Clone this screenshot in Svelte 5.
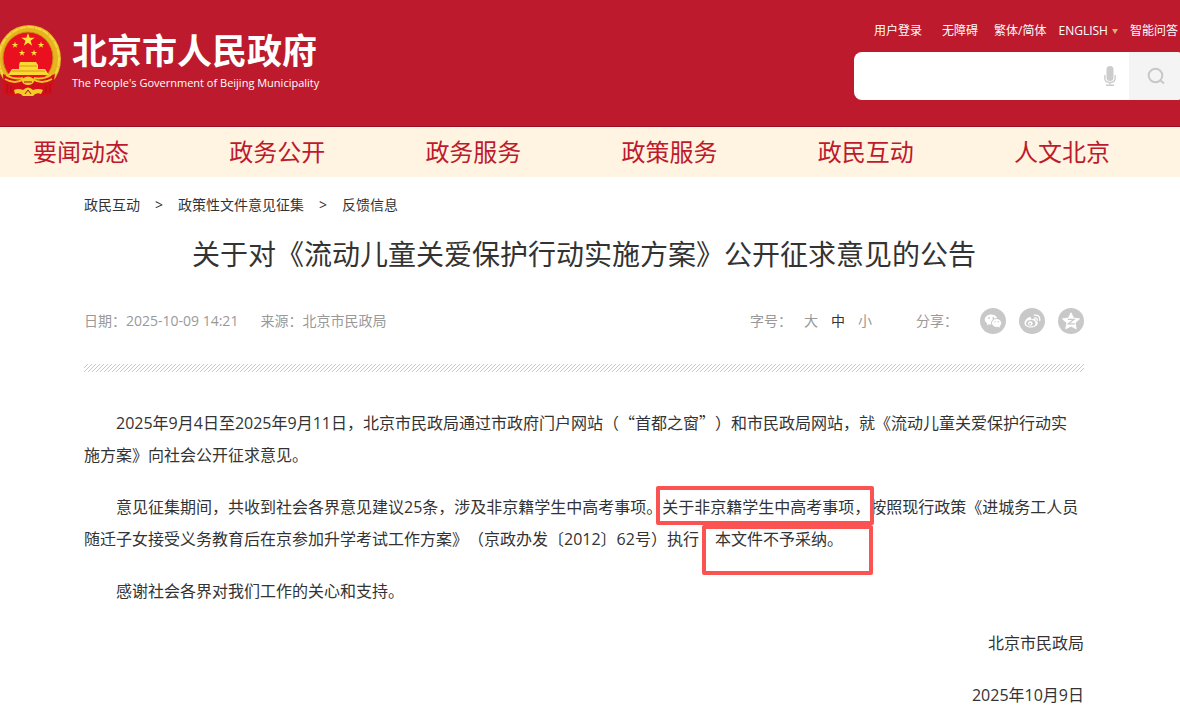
<script lang="ts">
  interface NavItem {
    label: string;
    href: string;
  }

  const userLinks: NavItem[] = [
    { label: '用户登录', href: '#login' },
    { label: '无障碍', href: '#accessible' },
    { label: '繁体/简体', href: '#variant' }
  ];

  const navItems: NavItem[] = [
    { label: '要闻动态', href: '#news' },
    { label: '政务公开', href: '#open' },
    { label: '政务服务', href: '#service' },
    { label: '政策服务', href: '#policy' },
    { label: '政民互动', href: '#interact' },
    { label: '人文北京', href: '#culture' }
  ];

  const crumbs: string[] = ['政民互动', '政策性文件意见征集', '反馈信息'];
  const sizes: string[] = ['大', '中', '小'];

  let activeSize: string = $state('中');
  let query: string = $state('');

  function handleSearch(event: SubmitEvent): void {
    event.preventDefault();
  }
</script>

{#snippet star(x: number, y: number, r: number)}
  <path
    transform="translate({x} {y}) scale({r})"
    d="M0-1 .23-.31 .95-.31 .37.12 .59.81 0 .38-.59.81-.37.12-.95-.31-.23-.31Z"
    fill="#fde23c"
  />
{/snippet}

<header class="site-header">
  <a class="brand" href="#home">
    <svg class="emblem" viewBox="0 0 62 74" aria-hidden="true">
      <ellipse cx="29" cy="35" rx="32" ry="34" fill="#e6b41f" />
      <ellipse cx="29" cy="35" rx="30" ry="32" fill="none" stroke="#f5d540" stroke-width="2" stroke-dasharray="7 1" />
      <ellipse cx="28" cy="34" rx="25" ry="26" fill="#ea1020" stroke="#c98a12" />
      {@render star(28, 16, 7)}
      {@render star(15, 21, 3.4)}
      {@render star(41, 21, 3.4)}
      {@render star(22, 29, 3.4)}
      {@render star(34, 29, 3.4)}
      <path d="M20 38h16l2 3v4h7l4 6H8l4-6h7v-4Z" fill="#fbd833" />
      <path d="M19 42h18M12 47h33" stroke="#d79a14" fill="none" />
      <path d="M3 50q11 4 20 6h12q11-2 20-6l-3 20-10 2-6-3H21l-6 3-11-2Z" fill="#d30f1c" />
      <path d="M5 55q10 6 19 0 4-3 8 0 10 6 20 0M6 51q8 5 17 3M51 51q-8 5-17 3" stroke="#f2c322" stroke-width="2" fill="none" />
      <ellipse cx="28" cy="57" rx="6" ry="4" fill="#f4cb2b" />
      <path d="M14 66q5-2 9 0 5-5 10 0 5-2 10 0l-2 4q-5-2-8 2H23q-3-4-8-2Z" fill="#f4cb2b" />
      <path d="M24 58h8M25 70l3-4 3 4M7 60v9M11 62v7M46 62v7M50 60v9" stroke="#a80f18" fill="none" />
    </svg>
    <span class="brand-text">
      <span class="brand-name">北京市人民政府</span>
      <span class="brand-en">The People's Government of Beijing Municipality</span>
    </span>
  </a>

  <div class="tools">
    <div class="user-links">
      {#each userLinks as link}
        <a href={link.href}>{link.label}</a>
      {/each}
      <a class="english" href="#english">ENGLISH <span class="caret"></span></a>
      <a href="#qa">智能问答</a>
    </div>
    <form class="search" onsubmit={handleSearch}>
      <input type="text" aria-label="搜索" bind:value={query} />
      <button class="voice" type="button" aria-label="语音">
        <svg width="12" height="20" viewBox="0 0 12 20">
          <rect x="2.5" y="0" width="7" height="15" rx="3.5" fill="#ccc" />
          <path d="M.8 9v3q0 4.5 5.2 4.5T11.2 12V9M6 16.5V19M2 19.3h8" fill="none" stroke="#ccc" stroke-width="1.4" />
        </svg>
      </button>
      <button class="submit" type="submit" aria-label="提交">
        <svg width="18" height="18" viewBox="0 0 18 18">
          <circle cx="8.5" cy="8.5" r="6.8" fill="none" stroke="#c8c8c8" stroke-width="2" />
          <path d="M13 13l4 3.5" stroke="#c8c8c8" stroke-width="2" />
        </svg>
      </button>
    </form>
  </div>
</header>

<nav class="main-nav">
  {#each navItems as item}
    <a href={item.href}>{item.label}</a>
  {/each}
</nav>

<main class="article">
  <div class="crumbs">
    {#each crumbs as crumb, i}
      {#if i > 0}<span>&gt;</span>{/if}
      <a href="#crumb-{i}">{crumb}</a>
    {/each}
  </div>

  <h1>关于对《流动儿童关爱保护行动实施方案》公开征求意见的公告</h1>

  <div class="meta">
    <div class="source">
      <span>日期：2025-10-09 14:21</span>
      <span>来源：北京市民政局</span>
    </div>
    <div class="options">
      <span>字号：</span>
      <div class="sizes">
        {#each sizes as size}
          <button type="button" class:active={size === activeSize} onclick={() => (activeSize = size)}>{size}</button>
        {/each}
      </div>
      <span>分享：</span>
      <div class="share">
        <a href="#wechat" aria-label="微信">
          <svg viewBox="0 0 26 26">
            <path d="M11.2 6.5c-3.6 0-6.4 2.2-6.4 5 0 1.7 1 3.1 2.5 4l-.6 2 2.3-1.2c.8.2 1.5.3 2.3.3-.9-3.8 2-6.7 6-6.5-.7-2.1-3.1-3.6-6.1-3.6Z" fill="#fff" />
            <path d="M21.3 15c0-2.3-2.2-4-4.7-4s-4.7 1.7-4.7 4 2.2 4 4.7 4c.6 0 1.2-.1 1.7-.2l1.8 1-.5-1.7c1-.7 1.7-1.8 1.7-3.1Z" fill="#fff" />
            <circle cx="9" cy="10" r=".9" /><circle cx="13.2" cy="10" r=".9" />
            <circle cx="15" cy="13.8" r=".7" /><circle cx="18.2" cy="13.8" r=".7" />
          </svg>
        </a>
        <a href="#weibo" aria-label="微博">
          <svg viewBox="0 0 26 26">
            <path d="M11.5 9.2c-1.2-1-6 2.3-6 6.1 0 2.6 3 4.2 6.3 4.2 4 0 7-2.2 7-4.5 0-1.4-1.1-2-2.2-2.3.7-1.9-.8-2.7-4.5-1.3.3-1 .1-1.8-.6-2.2Z" fill="#fff" />
            <ellipse cx="11.8" cy="15.3" rx="4.6" ry="3.2" />
            <circle cx="11.3" cy="15.5" r="2.3" fill="#fff" />
            <circle cx="11" cy="15.8" r="1" />
            <path d="M15.5 9.8q3-.2 2.7 2.6M15.3 7.2q6-.4 5.5 5.3" fill="none" stroke="#fff" stroke-width="1.3" stroke-linecap="round" />
          </svg>
        </a>
        <a href="#qzone" aria-label="QQ空间">
          <svg viewBox="0 0 26 26">
            <path d="M13 4.8l2.5 5.3 6 .8-4.4 4 1.1 5.9-5.2-2.8-5.2 2.8 1.1-5.9-4.4-4 6-.8Z" fill="#fff" stroke="#fff" stroke-linejoin="round" />
            <path d="M9.8 11.3h6.2l-5.6 4.5h6.4" fill="none" stroke="#c8c8c8" stroke-width="1.3" />
          </svg>
        </a>
      </div>
    </div>
  </div>

  <div class="hatch"></div>

  <div class="content">
    <p>2025年9月4日至2025年9月11日，北京市民政局通过市政府门户网站（<span class="cjk">“首都之窗”</span>）和市民政局网站，就《流动儿童关爱保护行动实施方案》向社会公开征求意见。</p>
    <p>意见征集期间，共收到社会各界意见建议25条，涉及非京籍学生中高考事项。<span class="boxed">关于非京籍学生中高考事项，</span>按照现行政策《进城务工人员随迁子女接受义务教育后在京参加升学考试工作方案》（京政办发〔2012〕62号）执行<span class="boxed deep">本文件不予采纳。</span></p>
    <p>感谢社会各界对我们工作的关心和支持。</p>
    <p class="sign">北京市民政局</p>
    <p class="sign">2025年10月9日</p>
  </div>
</main>

<style>
  :global(body) {
    margin: 0;
    background: #fff;
    color: #333;
    font-family: "Open Sans", "Noto Sans CJK SC", sans-serif;
    font-size: 14px;
    text-spacing-trim: space-all;
    overflow-x: hidden;
  }

  a {
    color: inherit;
    text-decoration: none;
  }

  button {
    padding: 0;
    border: 0;
    background: none;
    color: inherit;
    font: inherit;
    cursor: pointer;
  }

  svg {
    display: block;
  }

  .site-header {
    display: flex;
    justify-content: space-between;
    padding-top: 20px;
    padding-bottom: 26px;
    background: #bd1a2d;
    border-bottom: 1px solid #9a0f20;
    color: #fff;
  }

  .brand {
    display: flex;
    gap: 10px;
    padding-top: 4px;
  }

  .emblem {
    width: 62px;
    height: 74px;
  }

  .brand-text {
    display: flex;
    flex-direction: column;
    padding-top: 6px;
  }

  .brand-name {
    font-size: 35px;
    line-height: 42px;
    font-weight: bold;
  }

  .brand-en {
    font-size: 11px;
    line-height: 22px;
  }

  .tools {
    width: 326px;
  }

  .user-links {
    display: flex;
    justify-content: flex-end;
    gap: 12px;
    padding-right: 2px;
    font-size: 12px;
    line-height: 22px;
    white-space: nowrap;
  }

  .user-links a:nth-child(1) {
    margin-right: 8px;
  }

  .user-links a:nth-child(2) {
    margin-right: 4px;
  }

  .english {
    display: flex;
    align-items: center;
    gap: 4px;
  }

  .caret {
    border: 3px solid transparent;
    border-top: 5px solid #e0b070;
    border-bottom: 0;
  }

  .search {
    display: flex;
    height: 48px;
    margin-top: 10px;
    border-radius: 8px 2px 2px 8px;
    background: #fff;
    overflow: hidden;
  }

  .search input {
    flex: 1;
    min-width: 0;
    padding: 0 16px;
    border: 0;
    outline: 0;
    background: none;
    font: inherit;
  }

  .voice {
    display: grid;
    place-items: center;
    width: 38px;
  }

  .submit {
    display: grid;
    place-items: center;
    width: 51px;
    padding-left: 2px;
    background: #f4f4f4;
  }

  .main-nav {
    display: flex;
    justify-content: space-between;
    padding: 0 70px 0 33px;
    background: #fff4e1;
    color: #bd1a2d;
    font-size: 24px;
    line-height: 50px;
  }

  .article {
    max-width: 1000px;
    margin: 0 96px 0 84px;
    padding-top: 18px;
  }

  .crumbs {
    display: flex;
    gap: 15px;
    line-height: 20px;
  }

  h1 {
    margin: 19px 0 0;
    font-size: 28px;
    line-height: 40px;
    font-weight: normal;
    text-align: center;
  }

  .meta {
    display: flex;
    justify-content: space-between;
    align-items: center;
    margin-top: 34px;
    color: #999;
    line-height: 26px;
  }

  .source {
    display: flex;
    gap: 22px;
  }

  .options {
    display: flex;
  }

  .sizes {
    display: flex;
    gap: 13px;
    margin: 0 44px 0 12px;
  }

  .sizes .active {
    color: #333;
  }

  .share {
    display: flex;
    gap: 13px;
    margin-left: 22px;
  }

  .share a {
    width: 26px;
    height: 26px;
    border-radius: 50%;
    background: #c8c8c8;
    fill: #c8c8c8;
  }

  .hatch {
    height: 8px;
    margin: 30px 0 34px;
    background: linear-gradient(135deg, #fff 40%, #ccc 40% 60%, #fff 60%) 0 0 / 4px 4px;
  }

  .content {
    font-size: 16px;
    line-height: 32px;
  }

  .content p {
    margin: 0 0 20px;
    padding-right: 4px;
    text-indent: 2em;
  }

  .content .sign {
    padding-right: 0;
    text-align: right;
  }

  .cjk {
    font-family: "Noto Sans CJK SC", sans-serif;
  }

  .boxed {
    position: relative;
    text-indent: 0;
  }

  .deep {
    margin-left: 16px;
  }

  /* red frames drawn over the key sentences */
  .boxed::after {
    content: "";
    position: absolute;
    inset: -10px -4px -7px -6px;
    border: 4px solid #fa5352;
    border-radius: 2px;
  }

  .deep::after {
    inset: -3px -30px -25px -13px;
  }
</style>
